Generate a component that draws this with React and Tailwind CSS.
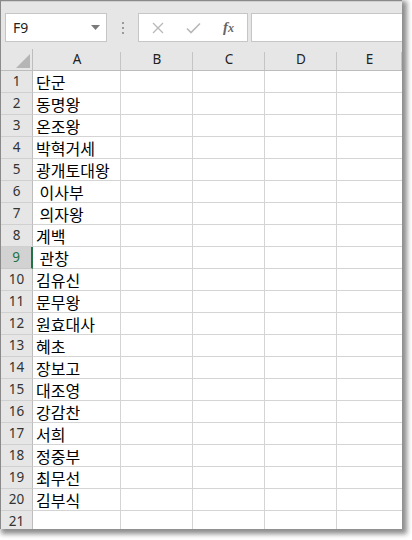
import React from "react";

const names = [
  "단군", "동명왕", "온조왕", "박혁거세", "광개토대왕", " 이사부", " 의자왕", "계백", " 관창",
  "김유신", "문무왕", "원효대사", "혜초", "장보고", "대조영", "강감찬", "서희", "정중부", "최무선", "김부식", "",
];

const cols = ["A", "B", "C", "D", "E"];

export default function App() {
  return (
    <div className="w-[412px] h-[540px] bg-white relative overflow-hidden" style={{ fontFamily: '"Noto Sans", "Noto Sans CJK KR", sans-serif' }}>
      <div className="w-[402px] h-[529px] border-l border-t border-[#8a8a8a] bg-white overflow-hidden shadow-[3px_3px_5px_2px_rgba(0,0,0,0.45)] flex flex-col">
        {/* toolbar */}
        <div className="h-[48px] shrink-0 bg-[#e6e6e6] flex items-start pt-[11px] pl-[4px] border-t border-[#d0d0d0]">
          <div className="w-[102px] h-[29px] bg-white border border-[#c6c6c6] flex items-center justify-between pl-[7px] pr-[6px]">
            <span className="text-[14px] text-[#222] leading-none">F9</span>
            <svg width="9" height="5" viewBox="0 0 9 5"><path d="M0 0 L9 0 L4.5 5 Z" fill="#7a7a7a" /></svg>
          </div>
          <div className="w-[31px] h-[29px] flex flex-col items-center justify-center gap-[3px]">
            <div className="w-[2px] h-[2px] bg-[#9a9a9a]" />
            <div className="w-[2px] h-[2px] bg-[#9a9a9a]" />
            <div className="w-[2px] h-[2px] bg-[#9a9a9a]" />
          </div>
          <div className="w-[110px] h-[29px] bg-white border border-[#c6c6c6] flex items-center">
            <div className="w-[37px] flex justify-center">
              <svg width="12" height="12" viewBox="0 0 12 12"><path d="M1 1 L11 11 M11 1 L1 11" stroke="#b8b8b8" strokeWidth="1.3" /></svg>
            </div>
            <div className="w-[34px] flex justify-center">
              <svg width="15" height="12" viewBox="0 0 15 12"><path d="M1 6.5 L5 10.5 L14 1.5" stroke="#b8b8b8" strokeWidth="1.6" fill="none" /></svg>
            </div>
            <div className="flex-1 flex justify-center">
              <span className="text-[15px] italic font-bold text-[#666] leading-none" style={{ fontFamily: '"Liberation Serif", serif' }}>f<span className="text-[12px]">x</span></span>
            </div>
          </div>
          <div className="ml-[3px] flex-1 h-[29px] bg-white border-t border-b border-l border-[#c6c6c6]" />
        </div>
        {/* grid */}
        <div className="grid grid-cols-[32px_88px_72px_72px_72px_65px]">
          <div className="h-[22px] bg-[#e6e6e6] border-b border-[#bdbdbd] border-r border-r-[#bdbdbd] relative">
            <svg className="absolute right-[2px] bottom-[2px]" width="14" height="14" viewBox="0 0 14 14"><path d="M14 0 L14 14 L0 14 Z" fill="#b5b5b5" /></svg>
          </div>
          {cols.map((c) => (
            <div key={c} className="h-[22px] bg-[#e6e6e6] border-b border-[#bdbdbd] flex items-center justify-center relative">
              <span className="text-[13.5px] text-[#222] leading-none">{c}</span>
              <div className="absolute right-0 top-[3px] bottom-0 w-px bg-[#c4c4c4]" />
            </div>
          ))}
          {names.map((n, i) => (
            <React.Fragment key={i}>
              <div
                className={
                  i === 8
                    ? "h-[22px] bg-[#d2d2d2] border-b border-[#c8c8c8] border-r-2 border-r-[#217346] flex items-center justify-center"
                    : "h-[22px] bg-[#e6e6e6] border-b border-[#d0d0d0] border-r border-r-[#bdbdbd] flex items-center justify-center"
                }
              >
                <span className={i === 8 ? "text-[13.5px] text-[#217346] leading-none" : "text-[13.5px] text-[#333] leading-none"}>{i + 1}</span>
              </div>
              <div className="h-[22px] border-b border-r border-[#d4d4d4] flex items-center pl-[3px] overflow-hidden">
                <span className="text-[16px] text-black leading-none whitespace-pre" style={{ fontFamily: '"Noto Sans CJK KR", sans-serif' }}>{n}</span>
              </div>
              <div className="h-[22px] border-b border-r border-[#d4d4d4]" />
              <div className="h-[22px] border-b border-r border-[#d4d4d4]" />
              <div className="h-[22px] border-b border-r border-[#d4d4d4]" />
              <div className="h-[22px] border-b border-[#d4d4d4]" />
            </React.Fragment>
          ))}
        </div>
      </div>
    </div>
  );
}
